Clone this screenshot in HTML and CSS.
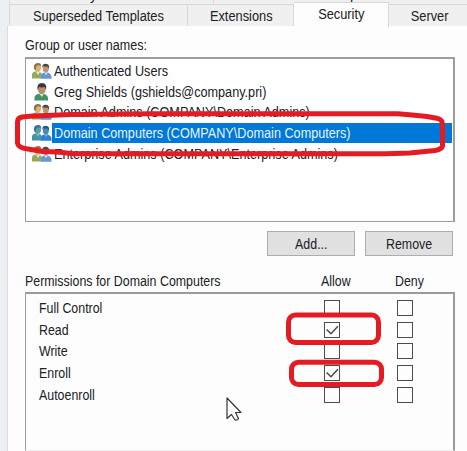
FILE: index.html
```html
<!DOCTYPE html>
<html lang="en">
<head>
<meta charset="utf-8">
<title>Security</title>
<link rel="stylesheet" href="styles.css">
</head>
<body>
<svg width="0" height="0" class="defs">
  <defs>
    <symbol id="group" viewBox="0 0 20 16">
      <path d="M0 15.5V11Q1 8.3 5 8.3T10 12V15.5Z" fill="#91aa5b"/>
      <path d="M4 9L6 12L8 9Z" fill="#e9e4cc"/>
      <ellipse cx="5.8" cy="4.6" rx="3.3" ry="4.2" fill="#dcb477"/>
      <path d="M2 6Q1 0 6 0Q9.5 .2 9 3Q6 1.6 4.5 3L3.6 7Z" fill="#92744b"/>
      <path d="M9 15.8V12Q10 9.2 14 9.2T19.5 13V15.8Z" fill="#6995d3"/>
      <path d="M12 9.5L14 12L16 9.5Z" fill="#dce8f1"/>
      <ellipse cx="13.8" cy="5.6" rx="3" ry="4" fill="#bd9574"/>
      <path d="M10.3 5Q9.8 .7 14 .8Q18 1 16.8 6L15.7 3.5Q13 4 11.4 3Z" fill="#4c4641"/>
    </symbol>
    <symbol id="group-selected" viewBox="0 0 20 16">
      <path d="M0 15.5V11Q1 8.3 5 8.3T10 12V15.5Z" fill="#4693a0"/>
      <path d="M4 9L6 12L8 9Z" fill="#75b9d5"/>
      <ellipse cx="5.8" cy="4.6" rx="3.3" ry="4.2" fill="#5c9caa"/>
      <path d="M2 6Q1 0 6 0Q9.5 .2 9 3Q6 1.6 4.5 3L3.6 7Z" fill="#31758e"/>
      <path d="M9 15.8V12Q10 9.2 14 9.2T19.5 13V15.8Z" fill="#2982d2"/>
      <path d="M12 9.5L14 12L16 9.5Z" fill="#76b5e5"/>
      <ellipse cx="13.8" cy="5.6" rx="3" ry="4" fill="#4e88ad"/>
      <path d="M10.3 5Q9.8 .7 14 .8Q18 1 16.8 6L15.7 3.5Q13 4 11.4 3Z" fill="#225b88"/>
    </symbol>
    <symbol id="user" viewBox="0 0 20 18">
      <path d="M2.5 17.5V14Q3.5 10.8 9.5 10.5Q15.5 11 16 15V17.5Z" fill="#419269"/>
      <path d="M7 10.5L10 14L12 10.5Z" fill="#d5e5d8"/>
      <ellipse cx="9.8" cy="6.3" rx="3.9" ry="5" fill="#b98e6b"/>
      <path d="M5.6 7Q4.3 0 10 0Q15.5 .4 14 7L12.8 4Q9 5 7.2 3.7Z" fill="#343b37"/>
    </symbol>
  </defs>
</svg>
<div class="dialog">
  <div class="upper-tabs"><div class="upper first"><span>y</span></div><div class="upper second"><span>p</span></div><div class="upper third"></div></div>
  <div class="tabs">
    <div class="tab superseded"><span class="t">Superseded Templates</span></div>
    <div class="tab extensions"><span class="t">Extensions</span></div>
    <div class="tab active"><span class="t">Security</span></div>
    <div class="tab server"><span class="t">Server</span></div>
  </div>
  <div class="panel">
    <div class="names-label"><span class="t">Group or user names:</span></div>
    <div class="list">
      <div class="entry"><svg class="icon"><use href="#group"/></svg><span class="name"><span class="t">Authenticated Users</span></span></div>
      <div class="entry"><svg class="icon person"><use href="#user"/></svg><span class="name"><span class="t">Greg Shields (gshields@company.pri)</span></span></div>
      <div class="entry"><svg class="icon"><use href="#group"/></svg><span class="name"><span class="t">Domain Admins (COMPANY\Domain Admins)</span></span></div>
      <div class="entry selected"><svg class="icon"><use href="#group-selected"/></svg><span class="name"><span class="t">Domain Computers (COMPANY\Domain Computers)</span></span></div>
      <div class="entry"><svg class="icon"><use href="#group"/></svg><span class="name"><span class="t">Enterprise Admins (COMPANY\Enterprise Admins)</span></span></div>
    </div>
    <div class="buttons"><div class="button"><span class="t">Add...</span></div><div class="button"><span class="t">Remove</span></div></div>
    <div class="perm-head"><span class="t">Permissions for Domain Computers</span><span class="t">Allow</span><span class="t">Deny</span></div>
    <div class="perms">
      <div class="perm"><span class="t">Full Control</span><i class="box"></i><i class="box"></i></div>
      <div class="perm"><span class="t">Read</span><i class="box"><svg viewBox="0 0 13 13"><path d="M1.5 6L5.5 10L12 3"/></svg></i><i class="box"></i></div>
      <div class="perm"><span class="t">Write</span><i class="box"></i><i class="box"></i></div>
      <div class="perm"><span class="t">Enroll</span><i class="box"><svg viewBox="0 0 13 13"><path d="M1.5 6L5.5 10L12 3"/></svg></i><i class="box"></i></div>
      <div class="perm"><span class="t">Autoenroll</span><i class="box"></i><i class="box"></i></div>
    </div>
  </div>
</div>
<svg class="marks" viewBox="0 0 467 451">
  <path d="M17.5 143V122Q17.5 118 22 117L33 116L72 114.5L150 113.7H398L412 115L427 116.5L438 118.5Q442.500 120 442.500 124V146Q442 149 435 150.500L410 153L386 153.700H73L58 152L43 151.500L25 148.500Q18 147 17.500 143Z"/>
  <rect x="288.500" y="315" width="90" height="27.500" rx="7"/>
  <rect x="291.500" y="362.300" width="90" height="22.300" rx="7"/>
  <path class="cursor" d="M227 398V418.500L231.500 414.500L235 420Q237.500 420.500 238.500 418.500L235.500 412.500H241Z"/>
</svg>
</body>
</html>
```
FILE: styles.css
```css
* { box-sizing: border-box; }
body {
  margin: 0;
  width: 467px;
  height: 451px;
  overflow: hidden;
  background: #edf0f2;
  color: #202027;
  font: 14px/20px "Liberation Sans", Arial, sans-serif;
}
.defs { position: absolute; }
.dialog { display: flex; flex-direction: column; height: 451px; padding-left: 7px; }
.t { display: inline-block; white-space: nowrap; transform: scaleX(.885); transform-origin: left center; }
.upper-tabs { display: flex; height: 4px; margin-left: 2px; flex: none; overflow: hidden; background: #f0f0f0; }
.upper { height: 4px; overflow: hidden; border-left: 1px solid #d9d9d9; line-height: 16px; }
.upper span { display: block; margin-top: -13px; }
.first { width: 204px; padding-left: 80px; }
.second { width: 234px; padding-left: 136px; }
.third { border: 0; }
.tabs { display: flex; align-items: flex-end; height: 23px; margin-left: 2px; flex: none; overflow-x: clip; }
.tab { display: flex; flex: none; justify-content: center; align-items: center; height: 23px; background: #f0f0f0; border: solid #d9d9d9; border-width: 1px 1px 1px 0; }
.tab .t, .button .t { transform-origin: center; }
.tab .t { transform: scaleX(.915); }
.superseded { width: 179px; border-left-width: 1px; }
.extensions { width: 106px; padding-left: 1px; }
.active { width: 95px; height: 25px; margin-top: -2px; padding-bottom: 3px; background: #fdfdfd; border-bottom: 0; }
.server { width: 90px; padding-right: 8px; }
.panel { flex: 1; margin-top: -1px; padding: 9px 12px 0 17px; background: #fdfdfd; border-left: 1px solid #e0dcdc; }
.active { position: relative; z-index: 1; }
.names-label { height: 22px; }
.names-label .t { transform: scaleX(.895); }
.list { height: 165px; padding: 3px 1px 0 6px; background: #fff; border: 2px solid #9b9da3; border-width: 2px 2px 1px 1px; }
.entry { display: flex; align-items: center; height: 20.7px; }
.icon { width: 20px; height: 16px; flex: none; margin-top: -3px; }
.person { height: 18px; }
.name { flex: 1; height: 20px; margin-top: -3px; padding-left: 2px; }
.name .t { transform: scaleX(.904); }
.selected .name { background: #0078d7; color: #e9f4ff; }
.buttons { display: flex; justify-content: flex-end; gap: 10px; margin: 9px 2px 0 0; }
.button { display: flex; align-items: center; justify-content: center; width: 88px; height: 25px; background: #e1e1e1; border: 1px solid #adadad; }
.perm-head { display: grid; grid-template-columns: 296px 74px auto; height: 21px; margin-top: 15px; }
.perms { height: 159px; padding: 3px 0 0 13px; background: #fdfdfd; border: 2px solid #999ba0; border-width: 2px 2px 1px 1px; border-bottom-color: #eee; }
.perm { display: grid; grid-template-columns: 285px 73px auto; align-items: center; height: 21.800px; }
.box { display: block; width: 16px; height: 16px; border: 1px solid #4b4b50; }
.box svg { display: block; width: 14px; height: 14px; fill: none; stroke: #4a4a4a; stroke-width: 1.400; }
.marks { position: absolute; left: 0; top: 0; width: 467px; height: 451px; fill: none; stroke: #e51b24; stroke-width: 5; stroke-linejoin: round; }
.cursor { fill: #fff; stroke: #34343b; stroke-width: 1.200; }
```
